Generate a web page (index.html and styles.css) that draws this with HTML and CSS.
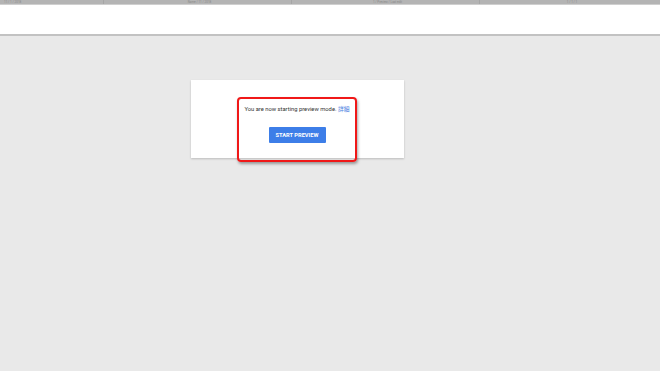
FILE: index.html
```html
<!DOCTYPE html>
<html lang="en">
<head>
    <meta charset="UTF-8">
    <title>Preview</title>
    <link rel="stylesheet" href="styles.css">
</head>
<body>

<div class="topbar">
    <div class="col"><span class="cut">11 / 1 / 2018</span></div>
    <div class="col center"><span class="cut">Name / 11 / 2018</span></div>
    <div class="col center"><span class="cut">1 / Preview / Last edit</span></div>
    <div class="col center"><span class="cut">1 / 1 / 1</span></div>
</div>
<div class="header"></div>

<div class="main">
    <div class="card">
        <div class="highlight">
            <p class="notice">You are now starting preview mode. <a href="#">詳細</a></p>
            <button class="start">START PREVIEW</button>
        </div>
    </div>
</div>

</body>
</html>
```

FILE: styles.css
```css
body {
    margin: 0;
    padding: 0;
    background-color: #e9e9e9;
    font-family: Roboto, "Noto Sans CJK JP", sans-serif;
    height: 371px;
    overflow: hidden;
}
.topbar {
    display: flex;
    height: 4px;
    background-color: #b4b4b4;
    overflow: hidden;
}
.col {
    width: 183px;
    border-right: 1px solid #a6a6a6;
    overflow: hidden;
    padding-left: 4px;
}
.col:first-child {
    width: 99px;
}
.col:last-child {
    flex: 1;
    border-right: none;
}
.col.center {
    text-align: center;
}
.cut {
    display: block;
    font-size: 3px;
    line-height: 4px;
    color: #8a8a8a;
    white-space: nowrap;
}
.header {
    height: 29px;
    background-color: #fff;
    border-top: 1px solid #cfcfcf;
    border-bottom: 2px solid #c2c2c2;
}
.main {
    padding-top: 44px;
    padding-left: 191px;
}
.card {
    width: 213px;
    height: 78px;
    background-color: #fff;
    box-shadow: 0 1px 2px rgba(0, 0, 0, 0.2);
    padding-top: 17px;
    box-sizing: border-box;
    padding-left: 46px;
}
.highlight {
    width: 116px;
    height: 61px;
    border: 2px solid #f01818;
    border-radius: 4px;
    box-shadow: 1px 2px 3px rgba(0, 0, 0, 0.35);
    text-align: center;
    position: relative;
    z-index: 1;
}
.notice {
    margin: 5px 0 0 0;
    font-size: 5.8px;
    color: #333;
}
.notice a {
    color: #4a7de0;
    text-decoration: none;
}
.start {
    margin-top: 14px;
    width: 57px;
    height: 16px;
    background-color: #3d7ee8;
    color: #fff;
    border: none;
    border-radius: 1px;
    font-family: Roboto, sans-serif;
    font-weight: bold;
    font-size: 5.7px;
    padding: 0;
}
```
